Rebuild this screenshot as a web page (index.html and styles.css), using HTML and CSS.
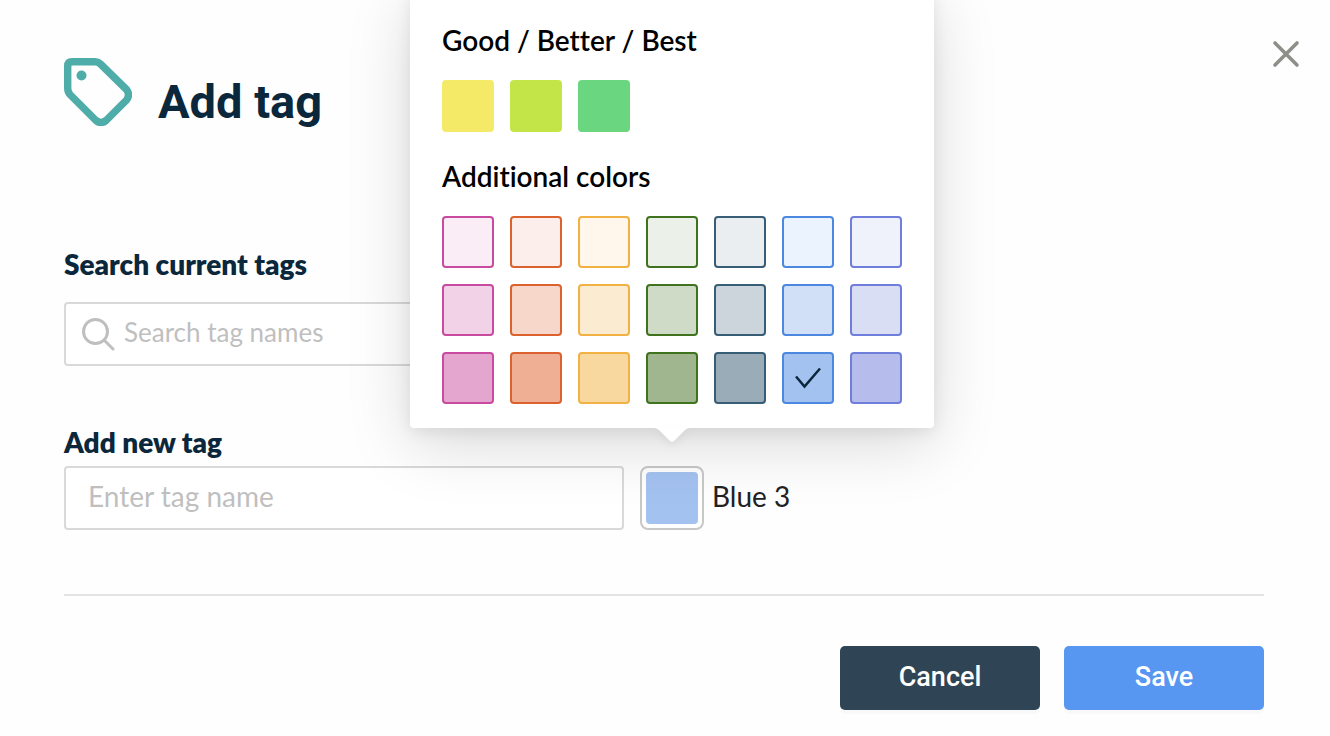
FILE: index.html
```html
<!DOCTYPE html>
<html lang="en">
<head>
<meta charset="utf-8">
<meta name="viewport" content="width=device-width, initial-scale=1">
<title>Add tag</title>
<link rel="stylesheet" href="styles.css">
</head>
<body>
<main class="dialog">
  <header class="dialog-header">
    <svg class="tag-icon" viewBox="0 0 68 68" aria-hidden="true">
      <path d="M8 3.700H31Q34 3.700 36.500 6L62.500 31.500Q66.500 37 62.500 42L42 62.500Q37 66.500 32 62.500L6 36.500Q3.700 34 3.700 30V8Q3.700 3.700 8 3.700Z"/>
      <circle cx="17.500" cy="17.500" r="5"/>
    </svg>
    <h1 class="title">Add tag</h1>
    <button class="close" type="button" aria-label="Close">
      <svg viewBox="0 0 28 28" aria-hidden="true"><path d="M3 3L25 25M25 3L3 25"/></svg>
    </button>
  </header>
  <form class="form">
    <div class="field search-field">
      <label class="label" for="search">Search current tags</label>
      <div class="text-box">
        <svg class="search-icon" viewBox="0 0 34 34" aria-hidden="true"><circle cx="14.500" cy="14.500" r="12"/><path d="M23.500 23.500L32 32"/></svg>
        <input class="text-input" id="search" type="text" placeholder="Search tag names">
      </div>
    </div>
    <div class="field">
      <label class="label" for="name">Add new tag</label>
      <div class="new-tag">
        <div class="text-box name-box">
          <input class="text-input" id="name" type="text" placeholder="Enter tag name">
        </div>
        <div class="picker">
          <button class="picker-button" id="picker" type="button" aria-label="Choose color" aria-expanded="true"><span class="picker-color"></span></button>
          <div class="popover">
            <h2 class="group-title">Good / Better / Best</h2>
            <div class="swatches">
              <input class="swatch good" type="radio" name="color" aria-label="Good">
              <input class="swatch better" type="radio" name="color" aria-label="Better">
              <input class="swatch best" type="radio" name="color" aria-label="Best">
            </div>
            <h2 class="group-title">Additional colors</h2>
            <div class="swatches">
              <input class="swatch pink one" type="radio" name="color" aria-label="Pink 1">
              <input class="swatch orange one" type="radio" name="color" aria-label="Orange 1">
              <input class="swatch yellow one" type="radio" name="color" aria-label="Yellow 1">
              <input class="swatch green one" type="radio" name="color" aria-label="Green 1">
              <input class="swatch slate one" type="radio" name="color" aria-label="Slate 1">
              <input class="swatch blue one" type="radio" name="color" aria-label="Blue 1">
              <input class="swatch purple one" type="radio" name="color" aria-label="Purple 1">
              <input class="swatch pink two" type="radio" name="color" aria-label="Pink 2">
              <input class="swatch orange two" type="radio" name="color" aria-label="Orange 2">
              <input class="swatch yellow two" type="radio" name="color" aria-label="Yellow 2">
              <input class="swatch green two" type="radio" name="color" aria-label="Green 2">
              <input class="swatch slate two" type="radio" name="color" aria-label="Slate 2">
              <input class="swatch blue two" type="radio" name="color" aria-label="Blue 2">
              <input class="swatch purple two" type="radio" name="color" aria-label="Purple 2">
              <input class="swatch pink three" type="radio" name="color" aria-label="Pink 3">
              <input class="swatch orange three" type="radio" name="color" aria-label="Orange 3">
              <input class="swatch yellow three" type="radio" name="color" aria-label="Yellow 3">
              <input class="swatch green three" type="radio" name="color" aria-label="Green 3">
              <input class="swatch slate three" type="radio" name="color" aria-label="Slate 3">
              <span class="selected">
                <input class="swatch blue three" type="radio" name="color" aria-label="Blue 3" checked>
                <svg class="check" viewBox="0 0 52 52" aria-hidden="true"><path d="M14 24.500L22.500 34.500L38 16.500"/></svg>
              </span>
              <input class="swatch purple three" type="radio" name="color" aria-label="Purple 3">
            </div>
            <svg class="arrow" viewBox="0 0 36 14" aria-hidden="true"><path d="M0 0Q3 0 5 2L15.500 12.500Q18 15 20.500 12.500L31 2Q33 0 36 0Z"/></svg>
          </div>
        </div>
        <label class="color-name" for="picker">Blue 3</label>
      </div>
    </div>
    <footer class="actions">
      <button class="button cancel" type="button">Cancel</button>
      <button class="button save" type="submit">Save</button>
    </footer>
  </form>
</main>
</body>
</html>
```
FILE: styles.css
```css
* { box-sizing: border-box; }

body {
  margin: 0;
  background: #fefefe;
  color: #0b273b;
  font-family: Lato, "Liberation Sans", sans-serif;
  font-size: 28px;
  font-variant-ligatures: none;
}

.dialog { padding: 40px 30px 26px 64px; }

.dialog-header {
  display: flex;
  align-items: flex-start;
  height: 206px;
}

.tag-icon {
  width: 68px;
  height: 68px;
  margin-top: 18px;
}
.tag-icon path { fill: none; stroke: #4fada9; stroke-width: 7.400; }
.tag-icon circle { fill: #4fada9; }

.title {
  flex: 1;
  margin: 34px 0 0 26px;
  font: 700 47px/56px Roboto, sans-serif;
}

.close {
  width: 28px;
  height: 28px;
  padding: 0;
  border: 0;
  background: none;
}
.close svg { display: block; }
.close path { fill: none; stroke: #8f8f8a; stroke-width: 3.600; stroke-linecap: round; }

.form { padding-right: 36px; }

.search-field {
  display: grid;
  gap: 20px;
  max-width: 560px;
  margin-bottom: 58px;
}

.label {
  display: block;
  line-height: 36px;
  font-weight: 800;
}

.text-box {
  display: flex;
  align-items: center;
  height: 64px;
  border: 2px solid #d9d9d9;
  border-radius: 4px;
  background: #fff;
}
.name-box { flex: 0 1 560px; }

.search-icon {
  flex: none;
  width: 34px;
  height: 34px;
  margin-left: 15px;
  fill: none;
  stroke: #bfbfbf;
  stroke-width: 3;
  stroke-linecap: round;
}

.text-input {
  flex: 1;
  min-width: 0;
  height: 100%;
  padding: 0 22px 4px;
  border: 0;
  outline: 0;
  background: none;
  color: inherit;
  font: inherit;
}
.search-icon + .text-input { padding-left: 9px; font-size: 26px; }
.text-input::placeholder { color: #bfbfbf; opacity: 1; }

.new-tag {
  display: flex;
  align-items: center;
  margin-top: 6px;
}

.picker {
  position: relative;
  margin: 0 8px 0 16px;
}

.picker-button {
  display: block;
  width: 64px;
  height: 64px;
  padding: 4px;
  border: 2px solid #c8c8c8;
  border-radius: 8px;
  background: #fff;
}
.picker-color {
  display: block;
  width: 52px;
  height: 52px;
  border-radius: 4px;
  background: #a4c2f0;
}

.color-name { padding-bottom: 4px; color: #222; }

.popover {
  position: absolute;
  bottom: calc(100% + 38px);
  left: 50%;
  width: 524px;
  padding: 32px 32px 24px;
  border-radius: 4px;
  background: #fff;
  box-shadow: 0 16px 64px rgba(0, 0, 0, 0.15), 0 4px 16px rgba(0, 0, 0, 0.08);
  transform: translateX(-50%);
}

.group-title {
  margin: 0 0 22px;
  color: #000;
  font-size: 28px;
  font-weight: 600;
  line-height: 36px;
}
.swatches + .group-title { margin-top: 26px; }

.swatches {
  display: grid;
  grid-template-columns: repeat(7, 52px);
  gap: 16px;
}

.swatch {
  display: block;
  width: 52px;
  height: 52px;
  margin: 0;
  border: 2px solid;
  border-radius: 4px;
  appearance: none;
}
.good { border-color: #f4ea68; background: #f4ea68; }
.better { border-color: #c3e548; background: #c3e548; }
.best { border-color: #6bd680; background: #6bd680; }

.pink { border-color: #c84b9f; }
.pink.one { background: #faedf6; }
.pink.two { background: #f1d2e7; }
.pink.three { background: #e4a5cf; }
.orange { border-color: #db622e; }
.orange.one { background: #fceeea; }
.orange.two { background: #f6d7ca; }
.orange.three { background: #efaf95; }
.yellow { border-color: #f1b143; }
.yellow.one { background: #fff7ec; }
.yellow.two { background: #fbebd0; }
.yellow.three { background: #f8d89f; }
.green { border-color: #40731e; }
.green.one { background: #ebf0e8; }
.green.two { background: #cfdbc7; }
.green.three { background: #9fb68f; }
.slate { border-color: #385d76; }
.slate.one { background: #eaeef0; }
.slate.two { background: #cdd5dc; }
.slate.three { background: #9aacb8; }
.blue { border-color: #4c88df; }
.blue.one { background: #ebf3fe; }
.blue.two { background: #d2e0f7; }
.blue.three { background: #a4c2f0; }
.purple { border-color: #707edb; }
.purple.one { background: #eff1fb; }
.purple.two { background: #dadef5; }
.purple.three { background: #b6bdec; }

.selected { position: relative; }
.check {
  position: absolute;
  inset: 0;
  fill: none;
  stroke: #0b273b;
  stroke-width: 2.500;
  pointer-events: none;
}

.arrow {
  position: absolute;
  top: 100%;
  left: calc(50% - 18px);
  width: 36px;
  height: 14px;
  fill: #fff;
  filter: drop-shadow(0 4px 4px rgba(0, 0, 0, 0.06));
}

.actions {
  display: flex;
  justify-content: flex-end;
  gap: 24px;
  margin-top: 64px;
  padding-top: 50px;
  border-top: 2px solid #e3e3e3;
}

.button {
  width: 200px;
  height: 64px;
  padding: 0 0 2px;
  border: 0;
  border-radius: 5px;
  box-shadow: 0 4px 0 #faf9fa;
  color: #fff;
  font: 500 27px/32px Roboto, sans-serif;
}
.cancel { background: #2f4555; }
.save { background: #5797f2; }
```
